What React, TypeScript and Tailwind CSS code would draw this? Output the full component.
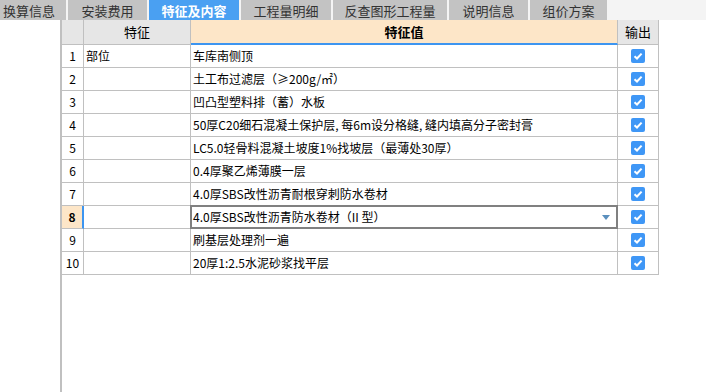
import React from "react";

const rows = [
  { n: 1, f: "部位", v: "车库南侧顶" },
  { n: 2, f: "", v: "土工布过滤层（≥200g/㎡）" },
  { n: 3, f: "", v: "凹凸型塑料排（蓄）水板" },
  { n: 4, f: "", v: "50厚C20细石混凝土保护层, 每6m设分格缝, 缝内填高分子密封膏" },
  { n: 5, f: "", v: "LC5.0轻骨料混凝土坡度1%找坡层（最薄处30厚）" },
  { n: 6, f: "", v: "0.4厚聚乙烯薄膜一层" },
  { n: 7, f: "", v: "4.0厚SBS改性沥青耐根穿刺防水卷材" },
  { n: 8, f: "", v: "4.0厚SBS改性沥青防水卷材（II 型）" },
  { n: 9, f: "", v: "刷基层处理剂一遍" },
  { n: 10, f: "", v: "20厚1:2.5水泥砂浆找平层" },
];

const tabs = [
  { t: "换算信息", w: "w-[66px]", active: false, left: true },
  { t: "安装费用", w: "w-[79px]", active: false },
  { t: "特征及内容", w: "w-[90px]", active: true },
  { t: "工程量明细", w: "w-[90px]", active: false },
  { t: "反查图形工程量", w: "w-[114px]", active: false },
  { t: "说明信息", w: "w-[79px]", active: false },
  { t: "组价方案", w: "w-[77px]", active: false },
];

function Check() {
  return (
    <div className="w-[14px] h-[14px] rounded-[2px] bg-[#3f97f6] flex items-center justify-center">
      <svg width="10" height="10" viewBox="0 0 10 10">
        <path d="M1.5 5.2 L4 7.5 L8.6 2.6" stroke="white" strokeWidth="2" fill="none" />
      </svg>
    </div>
  );
}

export default function App() {
  return (
    <div
      className="w-[706px] h-[392px] bg-white flex flex-col overflow-hidden text-black"
      style={{ fontFamily: '"Noto Sans CJK SC", "Noto Sans", sans-serif' }}
    >
      <div className="h-[20px] flex bg-[#f4f4f4] gap-[2px] shrink-0">
        {tabs.map((t) => (
          <div
            key={t.t}
            className={`${t.w} h-[20px] flex items-center text-[13px] leading-none ${
              t.left ? "justify-start pl-[3px]" : "justify-center"
            } ${t.active ? "bg-[#4aa0f2] text-white font-bold" : "bg-[#c3c3c3] text-[#333]"}`}
          >
            {t.t}
          </div>
        ))}
      </div>
      <div className="flex flex-1">
        <div className="w-[60px] bg-white" />
        <div className="w-[2px] bg-[#c0c0c0]" />
        <div className="flex-1 flex flex-col">
          <div className="flex h-[25px] text-[13px]">
            <div className="w-[22px] bg-[#e6e6e6] border-r border-b border-[#c0c0c0]" />
            <div className="w-[107px] bg-[#e6e6e6] border-r border-b border-[#c0c0c0] flex items-center justify-center">
              特征
            </div>
            <div className="w-[427px] bg-[#fde6c8] border-r border-[#c0c0c0] border-b-2 border-b-[#3d95f0] flex items-center justify-center font-bold">
              特征值
            </div>
            <div className="w-[41px] bg-[#e6e6e6] border-r border-b border-[#c0c0c0] flex items-center justify-center">
              输出
            </div>
          </div>
          {rows.map((r) => {
            const sel = r.n === 8;
            return (
              <div key={r.n} className="flex h-[23px] text-[12px]">
                <div
                  className={`w-[22px] border-b border-[#c0c0c0] flex items-center justify-center ${
                    sel
                      ? "bg-[#fde6c8] font-bold border-r-2 border-r-[#3d95f0]"
                      : "border-r"
                  }`}
                >
                  {r.n}
                </div>
                <div className="w-[107px] border-r border-b border-[#c0c0c0] flex items-center pl-[2px]">
                  {r.f}
                </div>
                <div className="w-[427px] border-r border-b border-[#c0c0c0] flex items-center pl-[2px] relative whitespace-nowrap">
                  {r.v}
                  {sel && (
                    <>
                      <div className="absolute -left-px -top-px right-[-1px] bottom-[-1px] border-2 border-[#808080]" />
                      <svg
                        className="absolute right-[7px] top-[9px]"
                        width="8"
                        height="5"
                        viewBox="0 0 8 5"
                      >
                        <path d="M0 0 H8 L4 5 Z" fill="#5a8fbd" />
                      </svg>
                    </>
                  )}
                </div>
                <div className="w-[41px] border-r border-b border-[#c0c0c0] flex items-center justify-center">
                  <Check />
                </div>
              </div>
            );
          })}
        </div>
      </div>
    </div>
  );
}
